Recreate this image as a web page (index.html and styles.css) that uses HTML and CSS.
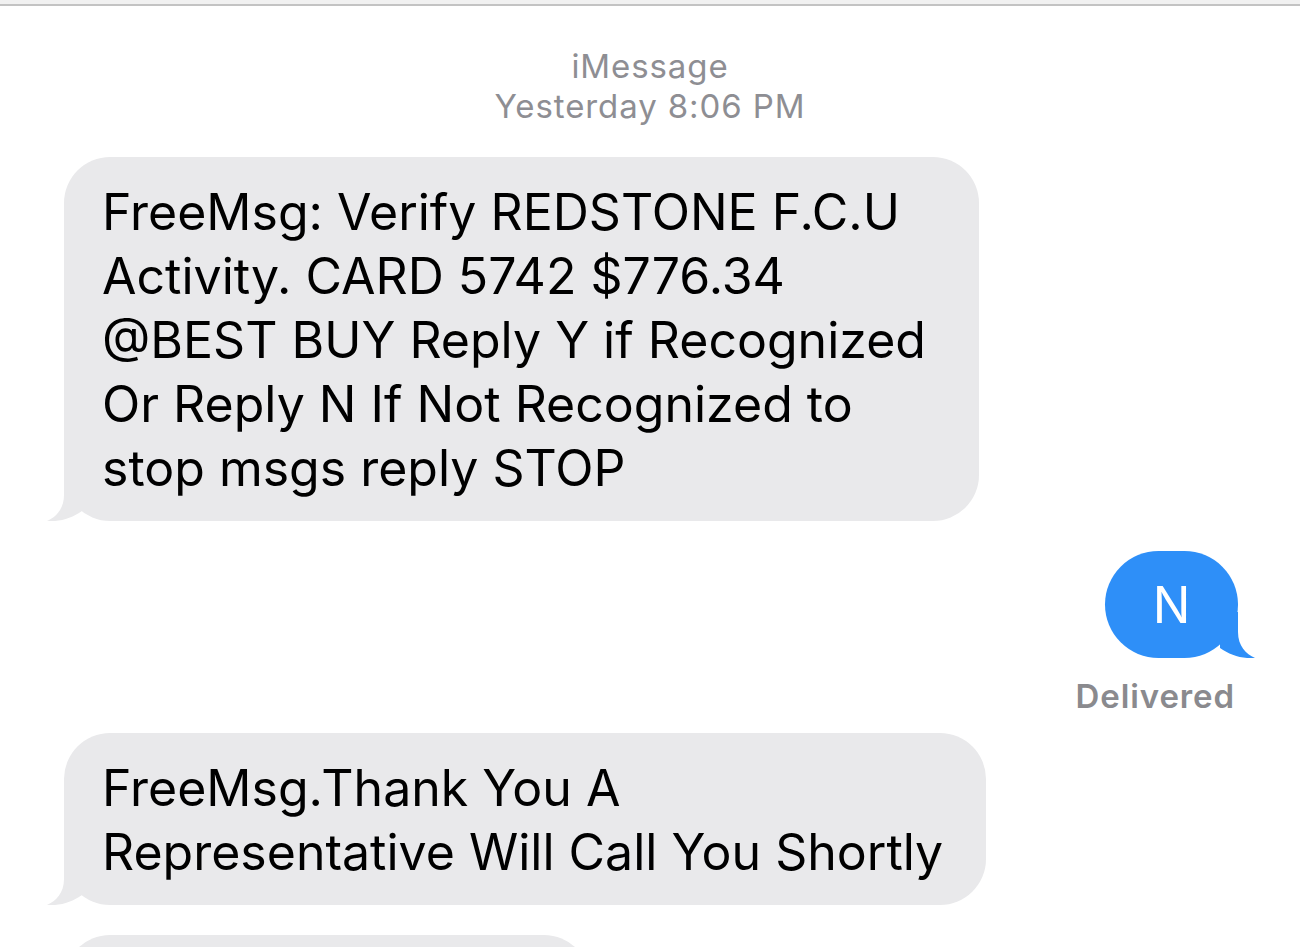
FILE: index.html
```html
<!DOCTYPE html>
<html lang="en">
<head>
<meta charset="utf-8">
<title>Messages</title>
<link rel="stylesheet" href="styles.css">
</head>
<body>
<div class="topbar"></div>
<main class="thread">
  <div class="meta">
    <div>iMessage</div>
    <div>Yesterday 8:06 PM</div>
  </div>

  <div class="row row-in">
    <div class="bubble in bubble-1">
      FreeMsg: Verify REDSTONE F.C.U<br>Activity. CARD 5742 $776.34<br>@BEST BUY Reply Y if Recognized<br>Or Reply N If Not Recognized to<br>stop msgs reply STOP
      <svg class="tail tail-in" viewBox="0 0 60 50" width="60" height="50" aria-hidden="true"><path d="M20 4 L20 24 C20 38 12 46 3 50 C16 51 28 47 38 40 L38 4 Z" fill="#e9e9eb"/></svg>
    </div>
  </div>

  <div class="row row-out">
    <div class="bubble out bubble-n">
      N
      <svg class="tail tail-out" viewBox="0 0 60 50" width="60" height="50" aria-hidden="true"><path d="M20 4 L20 24 C20 38 12 46 3 50 C16 51 28 47 38 40 L38 4 Z" fill="#2e8ff8"/></svg>
    </div>
  </div>
  <div class="status">Delivered</div>

  <div class="row row-in">
    <div class="bubble in bubble-2">
      FreeMsg.Thank You A<br>Representative Will Call You Shortly
      <svg class="tail tail-in" viewBox="0 0 60 50" width="60" height="50" aria-hidden="true"><path d="M20 4 L20 24 C20 38 12 46 3 50 C16 51 28 47 38 40 L38 4 Z" fill="#e9e9eb"/></svg>
    </div>
  </div>

  <div class="row row-in">
    <div class="bubble in bubble-3"></div>
  </div>
</main>
</body>
</html>
```

FILE: styles.css
```css
html, body {
  margin: 0;
  padding: 0;
  background: #ffffff;
  overflow: hidden;
}

body {
  font-family: Inter, "Noto Sans", "Liberation Sans", sans-serif;
  color: #000;
  height: 947px;
}

.topbar {
  height: 4px;
  background: #f1f1f1;
  border-bottom: 2px solid #c3c3c3;
}

.thread {
  display: flex;
  flex-direction: column;
}

.meta {
  margin-top: 40px;
  text-align: center;
  color: #8e8e93;
  font-size: 33px;
  line-height: 40px;
  letter-spacing: 0.9px;
}

.row {
  display: flex;
}

.row-in {
  justify-content: flex-start;
  padding-left: 64px;
}

.row-out {
  justify-content: flex-end;
  padding-right: 62px;
  margin-top: 30px;
}

.bubble {
  position: relative;
  box-sizing: border-box;
  font-size: 50px;
  line-height: 64px;
  letter-spacing: 0;
  border-radius: 46px;
}

.bubble.in {
  background: #e9e9eb;
  color: #000;
  padding: 23px 20px 21px 38px;
}

.bubble.out {
  background: #2e8ff8;
  color: #fff;
}

.bubble-1 {
  margin-top: 31px;
  width: 915px;
}

.bubble-2 {
  margin-top: 0;
  width: 922px;
  padding-bottom: 22px;
}

.bubble-3 {
  margin-top: 30px;
  width: 526px;
  height: 120px;
}

.bubble-n {
  width: 133px;
  height: 107px;
  border-radius: 54px;
  display: flex;
  align-items: center;
  justify-content: center;
  padding: 0;
  font-size: 50px;
  line-height: 1;
}

.tail {
  position: absolute;
  bottom: 0;
  display: block;
}

.tail-in {
  left: -20px;
}

.tail-out {
  right: -20px;
  transform: scaleX(-1);
}

.status {
  align-self: flex-end;
  margin-right: 65px;
  margin-top: 18px;
  margin-bottom: 17px;
  color: #8a8a8e;
  font-size: 33px;
  line-height: 40px;
  font-weight: 600;
  letter-spacing: 0.9px;
}
```
